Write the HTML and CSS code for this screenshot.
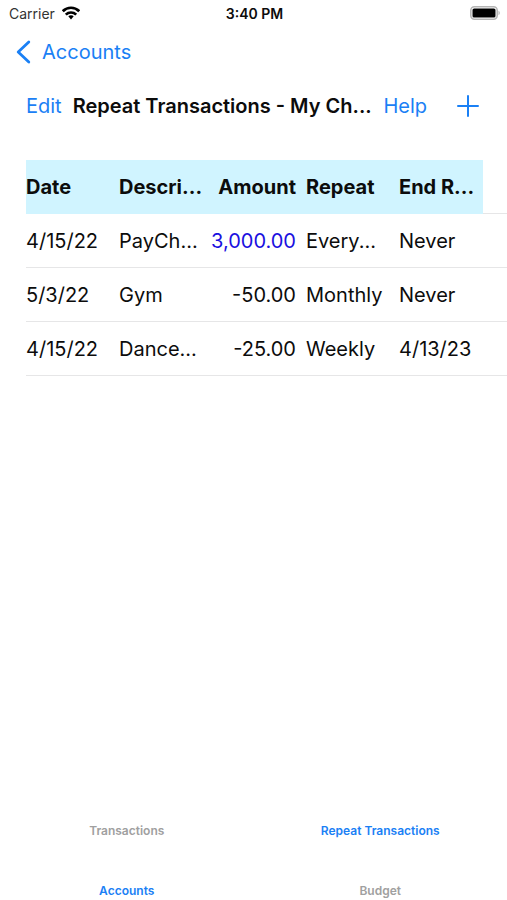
FILE: index.html
```html
<!DOCTYPE html>
<html lang="en">
  <head>
    <meta charset="UTF-8" />
    <meta name="viewport" content="width=device-width, initial-scale=1.0" />
    <title>Repeat Transactions</title>
    <link rel="stylesheet" href="styles.css">
  </head>
  <body>
    <div class="status-bar">
      <div class="carrier">
        <span>Carrier</span>
        <svg class="wifi-icon" viewBox="0 0 18 14" fill="none" stroke="#000" stroke-width="2.7">
          <path d="M.8 5.2C5.4 .6 12.6 .6 17.2 5.2" />
          <path d="M3.8 8.6C6.7 5.8 11.3 5.8 14.2 8.6" />
          <path d="M9 9.2c-1.1 0-2 .4-2.7 1.1L9 13.4l2.7-3.1C11 9.6 10.1 9.2 9 9.2z" fill="#000" stroke="none" />
        </svg>
      </div>
      <div class="time">3:40 PM</div>
      <svg class="battery-icon" viewBox="0 0 30 14">
        <rect x="0.8" y="0.8" width="26.4" height="12.4" rx="3.6" fill="#fff" stroke="#b5b5b5" stroke-width="1.6" />
        <rect x="2.5" y="2.5" width="23" height="9" rx="1.6" fill="#000" />
        <path d="M28.5 4.8c1.7.7 1.7 3.7 0 4.4z" fill="#b5b5b5" />
      </svg>
    </div>

    <nav class="nav-bar">
      <a href="#" class="back-link">
        <svg class="back-icon" viewBox="0 0 15 24" fill="none" stroke="currentColor" stroke-width="2.8" stroke-linecap="round" stroke-linejoin="round">
          <path d="M12.8 2L2.2 12l10.6 10" />
        </svg>
        <span>Accounts</span>
      </a>
    </nav>

    <div class="toolbar">
      <button class="tool-button">Edit</button>
      <h1 class="title">Repeat Transactions - My Ch...</h1>
      <button class="tool-button">Help</button>
      <button class="tool-button add-button" aria-label="Add">
        <svg class="add-icon" viewBox="0 0 22 22" fill="none" stroke="currentColor" stroke-width="2" stroke-linecap="round">
          <path d="M11 1v20M1 11h20" />
        </svg>
      </button>
    </div>

    <main class="content">
      <table class="transactions">
        <thead>
          <tr>
            <th>Date</th>
            <th class="description">Descri...</th>
            <th class="amount">Amount</th>
            <th>Repeat</th>
            <th class="end">End R...</th>
            <td class="edge"></td>
          </tr>
        </thead>
        <tbody>
          <tr>
            <td>4/15/22</td>
            <td>PayCh...</td>
            <td class="amount income">3,000.00</td>
            <td>Every...</td>
            <td class="end">Never</td>
            <td class="edge"></td>
          </tr>
          <tr>
            <td>5/3/22</td>
            <td>Gym</td>
            <td class="amount">-50.00</td>
            <td>Monthly</td>
            <td class="end">Never</td>
            <td class="edge"></td>
          </tr>
          <tr>
            <td>4/15/22</td>
            <td>Dance...</td>
            <td class="amount">-25.00</td>
            <td>Weekly</td>
            <td class="end">4/13/23</td>
            <td class="edge"></td>
          </tr>
        </tbody>
      </table>
    </main>

    <nav class="tabs">
      <a href="#" class="tab">Transactions</a>
      <a href="#" class="tab active">Repeat Transactions</a>
      <a href="#" class="tab active">Accounts</a>
      <a href="#" class="tab">Budget</a>
    </nav>
  </body>
</html>
```

FILE: styles.css
```css
*{
  box-sizing: border-box;
}
body{
  margin: 0;
  min-height: 100vh;
  display: flex;
  flex-direction: column;
  background-color: white;
  color: #0c0c0c;
  font-family: Inter, "Liberation Sans", sans-serif;
  font-size: 20px;
}
a{
  color: #1a80f5;
  text-decoration: none;
}
.status-bar{
  display: grid;
  grid-template-columns: 1fr auto 1fr;
  align-items: center;
  height: 26px;
  padding: 0 7px 0 9px;
  font-size: 14px;
}
.carrier{
  display: flex;
  align-items: center;
  gap: 7px;
  color: #333;
}
.time{
  font-weight: 600;
}
.wifi-icon{
  width: 18px;
  height: 14px;
}
.battery-icon{
  width: 30px;
  height: 14px;
  justify-self: end;
}
.nav-bar{
  display: flex;
  align-items: center;
  height: 52px;
  padding: 0 16px;
}
.back-link{
  display: flex;
  align-items: center;
  gap: 11px;
}
.back-icon{
  width: 15px;
  height: 24px;
}
.toolbar{
  display: flex;
  align-items: center;
  height: 56px;
  padding: 0 28px 0 26px;
}
.tool-button{
  padding: 0;
  border: none;
  background: none;
  color: #1a80f5;
  font: inherit;
  cursor: pointer;
}
.title{
  flex: 1;
  min-width: 0;
  margin: 0;
  padding-left: 11px;
  font-size: 20px;
  font-weight: 600;
  white-space: nowrap;
}
.add-button{
  display: flex;
  margin-left: 30px;
}
.add-icon{
  width: 22px;
  height: 22px;
}
.content{
  flex: 1;
  padding: 26px 0 0 26px;
}
.transactions{
  width: 100%;
  table-layout: fixed;
  border-collapse: separate;
  border-spacing: 0;
}
.transactions th,
.transactions td{
  height: 54px;
  padding: 0 10px 0 0;
  border-bottom: 1px solid #e6e6e7;
  text-align: left;
  white-space: nowrap;
}
.transactions th{
  background-color: #d0f4ff;
  border-bottom-color: #d0f4ff;
  font-weight: 700;
}
.transactions .description{
  width: 91px;
}
.transactions .amount{
  width: 96px;
  text-align: right;
}
.transactions .income{
  color: #1a10e0;
}
.transactions .end{
  width: 84px;
  padding-right: 0;
}
.transactions .edge{
  width: 24px;
  padding: 0;
}
.tabs{
  display: grid;
  grid-template-columns: 1fr 1fr;
  row-gap: 40px;
  padding-top: 20px;
}
.tab{
  padding-top: 2px;
  color: #a0a0a0;
  font-size: 12px;
  font-weight: 600;
  line-height: 18px;
  text-align: center;
}
.tab.active{
  color: #1a80f5;
}
```
